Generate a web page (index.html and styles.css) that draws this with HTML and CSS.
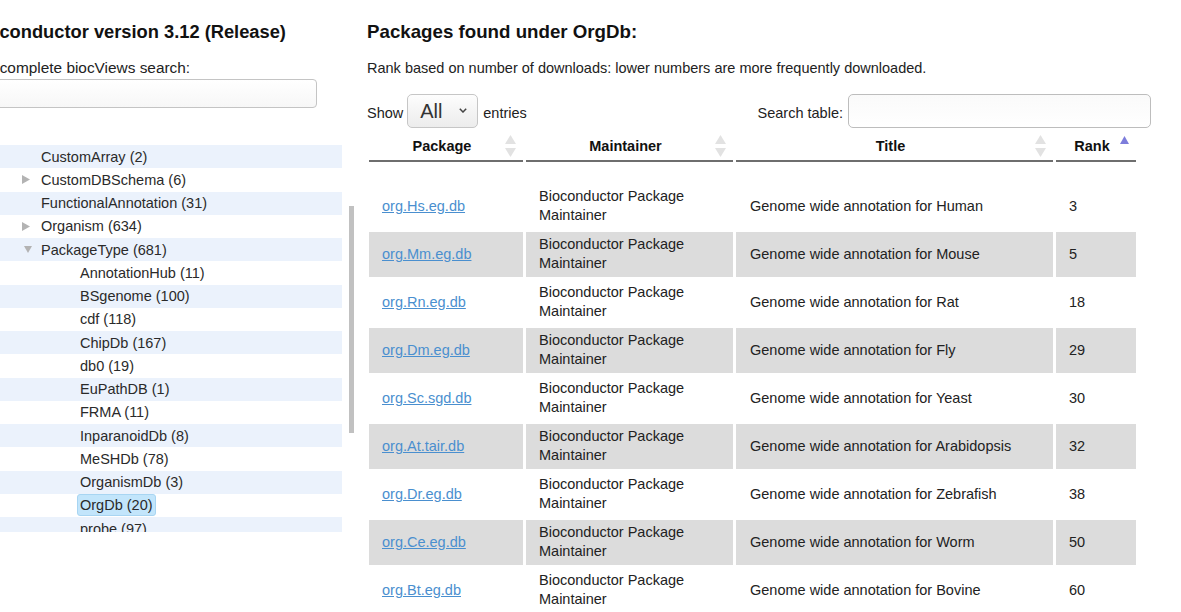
FILE: index.html
```html
<!DOCTYPE html>
<html>
<head>
<meta charset="utf-8">
<link rel="stylesheet" href="styles.css">
</head>
<body>
<div class="page">
  <div class="left">
    <h3 class="title left-title">Bioconductor version 3.12 (Release)</h3>
    <div class="ac-label">Autocomplete biocViews search:</div>
    <input class="ac-input" type="text">
    <div class="tree-wrap">
      <div class="tree">
        <div class="node l1"><span class="tog"></span><span class="lbl">CustomArray (2)</span></div>
        <div class="node l1"><span class="tog"><svg width="8" height="9" viewBox="0 0 8 9"><polygon points="0,0 8,4.5 0,9" fill="#b3b3b3"/></svg></span><span class="lbl">CustomDBSchema (6)</span></div>
        <div class="node l1"><span class="tog"></span><span class="lbl">FunctionalAnnotation (31)</span></div>
        <div class="node l1"><span class="tog"><svg width="8" height="9" viewBox="0 0 8 9"><polygon points="0,0 8,4.5 0,9" fill="#b3b3b3"/></svg></span><span class="lbl">Organism (634)</span></div>
        <div class="node l1"><span class="tog down"><svg width="8" height="7" viewBox="0 0 8 7"><polygon points="0,0 8,0 4,7" fill="#b3b3b3"/></svg></span><span class="lbl">PackageType (681)</span></div>
        <div class="node l2"><span class="tog"></span><span class="lbl">AnnotationHub (11)</span></div>
        <div class="node l2"><span class="tog"></span><span class="lbl">BSgenome (100)</span></div>
        <div class="node l2"><span class="tog"></span><span class="lbl">cdf (118)</span></div>
        <div class="node l2"><span class="tog"></span><span class="lbl">ChipDb (167)</span></div>
        <div class="node l2"><span class="tog"></span><span class="lbl">db0 (19)</span></div>
        <div class="node l2"><span class="tog"></span><span class="lbl">EuPathDB (1)</span></div>
        <div class="node l2"><span class="tog"></span><span class="lbl">FRMA (11)</span></div>
        <div class="node l2"><span class="tog"></span><span class="lbl">InparanoidDb (8)</span></div>
        <div class="node l2"><span class="tog"></span><span class="lbl">MeSHDb (78)</span></div>
        <div class="node l2"><span class="tog"></span><span class="lbl">OrganismDb (3)</span></div>
        <div class="node l2"><span class="tog"></span><span class="lbl selected">OrgDb (20)</span></div>
        <div class="node l2"><span class="tog"></span><span class="lbl">probe (97)</span></div>
      </div>
      <div class="track"><div class="thumb"></div></div>
    </div>
  </div>

  <div class="right">
    <h3 class="title">Packages found under OrgDb:</h3>
    <p class="note">Rank based on number of downloads: lower numbers are more frequently downloaded.</p>
    <div class="controls">
      <div class="len">
        <span class="ctl-text">Show</span>
        <div class="select"><span class="sel-val">All</span><svg class="chev" width="8" height="5" viewBox="0 0 8 5"><polyline points="0.8,0.8 4,4 7.2,0.8" fill="none" stroke="#444" stroke-width="1.5"/></svg></div>
        <span class="ctl-text entries">entries</span>
      </div>
      <div class="filter">
        <span class="ctl-text">Search table:</span>
        <input class="search" type="text">
      </div>
    </div>
    <table class="pkgs">
      <thead>
        <tr>
          <th class="c-pkg">Package<svg class="sort" width="11" height="22" viewBox="0 0 11 22"><polygon points="5.5,0 11,9 0,9" fill="#e2e2e2"/><polygon points="0,13 11,13 5.5,22" fill="#e2e2e2"/></svg></th>
          <th class="c-mnt">Maintainer<svg class="sort" width="11" height="22" viewBox="0 0 11 22"><polygon points="5.5,0 11,9 0,9" fill="#e2e2e2"/><polygon points="0,13 11,13 5.5,22" fill="#e2e2e2"/></svg></th>
          <th class="c-ttl">Title<svg class="sort" width="11" height="22" viewBox="0 0 11 22"><polygon points="5.5,0 11,9 0,9" fill="#e2e2e2"/><polygon points="0,13 11,13 5.5,22" fill="#e2e2e2"/></svg></th>
          <th class="c-rnk">Rank<svg class="sort-asc" width="9" height="8" viewBox="0 0 9 8"><polygon points="4.5,0 9,8 0,8" fill="#7d7ddb"/></svg></th>
        </tr>
        <tr class="spacer"><td></td><td></td><td></td><td></td></tr>
      </thead>
      <tbody>
        <tr><td><a href="#">org.Hs.eg.db</a></td><td>Bioconductor Package Maintainer</td><td>Genome wide annotation for Human</td><td>3</td></tr>
        <tr class="even"><td><a href="#">org.Mm.eg.db</a></td><td>Bioconductor Package Maintainer</td><td>Genome wide annotation for Mouse</td><td>5</td></tr>
        <tr><td><a href="#">org.Rn.eg.db</a></td><td>Bioconductor Package Maintainer</td><td>Genome wide annotation for Rat</td><td>18</td></tr>
        <tr class="even"><td><a href="#">org.Dm.eg.db</a></td><td>Bioconductor Package Maintainer</td><td>Genome wide annotation for Fly</td><td>29</td></tr>
        <tr><td><a href="#">org.Sc.sgd.db</a></td><td>Bioconductor Package Maintainer</td><td>Genome wide annotation for Yeast</td><td>30</td></tr>
        <tr class="even"><td><a href="#">org.At.tair.db</a></td><td>Bioconductor Package Maintainer</td><td>Genome wide annotation for Arabidopsis</td><td>32</td></tr>
        <tr><td><a href="#">org.Dr.eg.db</a></td><td>Bioconductor Package Maintainer</td><td>Genome wide annotation for Zebrafish</td><td>38</td></tr>
        <tr class="even"><td><a href="#">org.Ce.eg.db</a></td><td>Bioconductor Package Maintainer</td><td>Genome wide annotation for Worm</td><td>50</td></tr>
        <tr><td><a href="#">org.Bt.eg.db</a></td><td>Bioconductor Package Maintainer</td><td>Genome wide annotation for Bovine</td><td>60</td></tr>
      </tbody>
    </table>
  </div>
</div>
</body>
</html>
```

FILE: styles.css
```css
html, body {
  margin: 0;
  padding: 0;
  background: #fff;
  overflow: hidden;
}
body {
  font-family: "Liberation Sans", Arial, sans-serif;
  font-size: 14.5px;
  color: #222;
}
.page {
  display: flex;
  gap: 12px;
  padding-top: 21px;
  width: 1300px;
}
.left {
  width: 385px;
  flex: none;
  margin-left: -30px;
  display: flex;
  flex-direction: column;
}
.title {
  margin: 0;
  font-size: 18.72px;
  line-height: 22px;
  font-weight: bold;
  color: #111;
  white-space: nowrap;
}
.left-title {
  font-size: 18.3px;
}
.ac-label {
  margin-top: 16px;
  margin-left: -2px;
  font-size: 15.4px;
  line-height: 18px;
  color: #222;
  white-space: nowrap;
}
.ac-input {
  margin: 2px 0 0 0;
  width: 347px;
  height: 29px;
  box-sizing: border-box;
  border: 1px solid #c4c4c4;
  border-radius: 4px;
  background: linear-gradient(#fff, #f7f7f7);
  padding: 0;
}
.tree-wrap {
  margin-top: 37px;
  display: flex;
  height: 387px;
  overflow: hidden;
}
.tree {
  width: 372px;
  flex: none;
  overflow: hidden;
}
.node {
  height: 23.25px;
  display: flex;
  align-items: center;
  color: #2a2a2a;
  white-space: nowrap;
}
.node:nth-child(odd) {
  background: #ebf2fc;
}
.node.l1 { padding-left: 52px; }
.node.l2 { padding-left: 91px; }
.tog {
  width: 17px;
  flex: none;
  display: flex;
  align-items: center;
}
.tog.down svg { margin-left: 2px; }
.lbl {
  padding: 0 2px;
  height: 22px;
  line-height: 21px;
  box-sizing: border-box;
  border: 1px solid transparent;
  margin-left: -1px;
  border-radius: 3px;
}
.lbl.selected {
  background: #c2e5fb;
  border-color: #a8d5f2;
}
.track {
  width: 13px;
  flex: none;
}
.thumb {
  margin-left: 7px;
  margin-top: 60.7px;
  width: 5px;
  height: 227px;
  background: #c1c1c1;
}
.right {
  width: 784px;
  flex: none;
}
.note {
  margin: 17px 0 0 0;
  line-height: 17px;
  color: #222;
  white-space: nowrap;
}
.controls {
  margin-top: 16px;
  height: 35px;
  display: flex;
  justify-content: space-between;
  align-items: center;
}
.len, .filter {
  display: flex;
  align-items: center;
}
.ctl-text {
  padding-top: 5px;
  line-height: 17px;
  white-space: nowrap;
}
.select {
  margin-left: 4px;
  width: 71px;
  height: 34px;
  box-sizing: border-box;
  border: 1px solid #c6c6c6;
  border-radius: 5px;
  background: linear-gradient(#fdfdfd, #ececec);
  display: flex;
  align-items: center;
  padding-left: 12px;
}
.sel-val {
  font-size: 20px;
  color: #333;
  line-height: 24px;
}
.chev {
  margin-left: 16px;
}
.entries {
  margin-left: 5px;
}
.search {
  margin: 0 0 0 5px;
  width: 303px;
  height: 34px;
  box-sizing: border-box;
  border: 1px solid #bdbdbd;
  border-radius: 5px;
  background: linear-gradient(#fafafa, #fff);
  padding: 0;
}
.pkgs {
  border-collapse: separate;
  border-spacing: 3px;
  table-layout: fixed;
  width: 773px;
  margin-left: -1px;
}
.pkgs th, .pkgs td {
  box-sizing: border-box;
}
.pkgs th {
  position: relative;
  padding: 7px 18px 5px 10px;
  line-height: 16.7px;
  font-weight: bold;
  color: #111;
  text-align: center;
  border-bottom: 2px solid #6e6e6e;
}
.c-pkg { width: 154px; }
.c-mnt { width: 207px; }
.c-ttl { width: 317px; }
.c-rnk { width: 80px; }
.sort {
  position: absolute;
  right: 7px;
  top: 4px;
}
.sort-asc {
  position: absolute;
  right: 7px;
  top: 5px;
}
.spacer td {
  height: 16px;
  padding: 0;
}
.pkgs tbody td {
  height: 45px;
  padding: 0 13px;
  line-height: 19px;
  vertical-align: middle;
  color: #222;
}
.pkgs tbody tr.even td {
  background: #dcdcdc;
}
.pkgs td:nth-child(3) {
  padding-left: 14px;
}
.pkgs a {
  color: #4a8fcf;
  text-decoration: underline;
}
```
